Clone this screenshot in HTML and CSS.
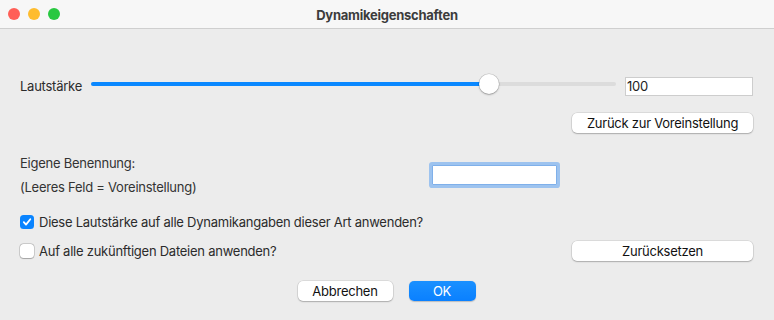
FILE: index.html
```html
<!DOCTYPE html>
<html lang="de">
<head>
  <meta charset="UTF-8" />
  <title>Dynamikeigenschaften</title>
  <link rel="stylesheet" href="styles.css">
</head>
<body>
  <div class="window">
    <div class="titlebar">
      <div class="lights">
        <span class="light red"></span>
        <span class="light yellow"></span>
        <span class="light green"></span>
      </div>
      <div class="title">Dynamikeigenschaften</div>
      <div></div>
    </div>

    <div class="content">
      <div class="slider-row">
        <label class="slider-label">Lautstärke</label>
        <div class="slider">
          <div class="track"></div>
          <div class="fill" style="width: 75.8%"></div>
          <div class="thumb" style="left: 75.8%"></div>
        </div>
        <input class="field value" type="text" value="100" />
      </div>

      <div class="right-row">
        <button class="btn wide">Zurück zur Voreinstellung</button>
      </div>

      <div class="name-row">
        <div class="name-text">
          <div>Eigene Benennung:</div>
          <div>(Leeres Feld = Voreinstellung)</div>
        </div>
        <input class="field name focused" type="text" />
      </div>

      <div class="check-row first">
        <span class="box checked">
          <svg width="10" height="10" viewBox="0 0 10 10"><path d="M1.8 5.2 L4 7.6 L8.3 2.2" fill="none" stroke="#fff" stroke-width="1.8" stroke-linecap="round" stroke-linejoin="round"/></svg>
        </span>
        <span>Diese Lautstärke auf alle Dynamikangaben dieser Art anwenden?</span>
      </div>

      <div class="check-row second">
        <span class="box"></span>
        <span class="grow">Auf alle zukünftigen Dateien anwenden?</span>
        <button class="btn wide">Zurücksetzen</button>
      </div>

      <div class="actions">
        <button class="btn cancel">Abbrechen</button>
        <button class="btn ok">OK</button>
      </div>
    </div>
  </div>
</body>
</html>
```

FILE: styles.css
```css
* {
  box-sizing: border-box;
}
body {
  margin: 0;
  padding: 0;
  font-family: Inter, "Liberation Sans", sans-serif;
  font-size: 13px;
  letter-spacing: -0.25px;
  color: #2b2b2b;
  background: #ececec;
}
.window {
  width: 774px;
  height: 320px;
  background: #ececec;
}
.titlebar {
  height: 29px;
  display: grid;
  grid-template-columns: 1fr auto 1fr;
  align-items: center;
  background: #f7f7f7;
  border-bottom: 1px solid #cfcfcf;
}
.lights {
  display: flex;
  gap: 8px;
  padding-left: 8px;
}
.light {
  width: 12px;
  height: 12px;
  border-radius: 50%;
}
.red { background: #ff5f57; }
.yellow { background: #febc2e; }
.green { background: #28c840; }
.title {
  font-weight: 700;
  color: #3c3c3c;
  font-size: 13px;
  margin-top: 1px;
}
.content {
  padding: 48px 21px 0 20px;
}
.slider-row {
  display: flex;
  align-items: center;
  height: 18px;
}
.slider-label {
  width: 71px;
}
.slider {
  position: relative;
  flex: 1;
  height: 20px;
  margin-right: 9px;
}
.track {
  position: absolute;
  left: 0;
  right: 0;
  top: 6px;
  height: 4px;
  border-radius: 2px;
  background: #dcdcdc;
}
.fill {
  position: absolute;
  left: 0;
  top: 6px;
  height: 4px;
  border-radius: 2px;
  background: #0a88ff;
}
.thumb {
  position: absolute;
  top: -2px;
  width: 20px;
  height: 20px;
  margin-left: -10px;
  border-radius: 50%;
  background: #fff;
  box-shadow: 0 0 0 0.5px rgba(0,0,0,0.18), 0 1px 2px rgba(0,0,0,0.25);
}
.field {
  font-family: inherit;
  font-size: 13px;
  letter-spacing: inherit;
  color: #222;
  background: #fff;
  border: 1px solid #cdcdcd;
  border-radius: 0;
  outline: none;
  padding: 0 1px;
}
.value {
  width: 128px;
  height: 19px;
}
.right-row {
  display: flex;
  justify-content: flex-end;
  margin-top: 18px;
}
.btn {
  font-family: inherit;
  font-size: 13px;
  letter-spacing: inherit;
  color: #111;
  background: #fff;
  border: none;
  border-radius: 5px;
  height: 20px;
  padding: 0;
  box-shadow: 0 0 0 0.5px rgba(0,0,0,0.14), 0 1px 1.5px rgba(0,0,0,0.22);
}
.wide {
  width: 181px;
}
.name-row {
  display: flex;
  align-items: center;
  margin-top: 17px;
}
.name-text {
  width: 412px;
  line-height: 24px;
  color: #333;
  padding-top: 1px;
}
.name {
  width: 125px;
  height: 20px;
  margin-top: 1px;
  border-color: #7fb0ea;
  box-shadow: 0 0 0 3px #9dc3ef;
  border-radius: 1px;
}
.check-row {
  display: flex;
  align-items: center;
  gap: 5px;
}
.check-row.first {
  margin-top: 15px;
  height: 16px;
}
.check-row.second {
  margin-top: 11px;
  height: 20px;
}
.grow {
  flex: 1;
}
.box {
  width: 14px;
  height: 14px;
  border-radius: 3.5px;
  background: #fff;
  box-shadow: 0 0 0 0.5px rgba(0,0,0,0.25), 0 0.5px 1px rgba(0,0,0,0.2);
  display: flex;
  align-items: center;
  justify-content: center;
}
.box.checked {
  background: #0a84ff;
  box-shadow: none;
}
.actions {
  display: flex;
  justify-content: center;
  gap: 16px;
  margin-top: 20px;
}
.cancel {
  width: 95px;
}
.ok {
  width: 67px;
  color: #fff;
  background: linear-gradient(#1a90ff, #0a80ff);
  box-shadow: 0 0.5px 1px rgba(0,0,0,0.2);
}
```
